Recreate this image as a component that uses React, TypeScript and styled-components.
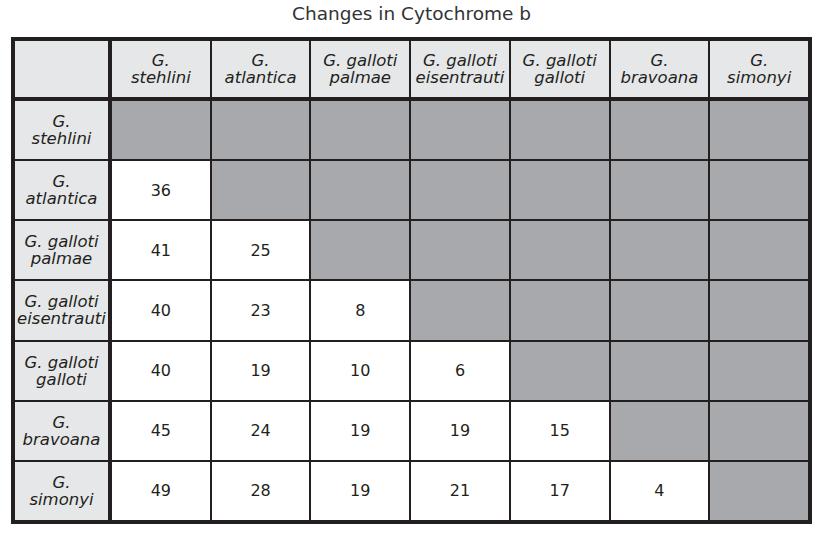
import React from 'react';
import styled, { createGlobalStyle } from 'styled-components';

const GlobalStyle = createGlobalStyle`
  html, body {
    margin: 0;
    padding: 0;
    background: #ffffff;
  }
  body {
    font-family: "DejaVu Sans", Verdana, sans-serif;
    color: #231f20;
  }
`;

const Page = styled.div`
  width: 823px;
  height: 533px;
  padding: 3px 11px 0 11px;
  box-sizing: border-box;
`;

const Title = styled.div`
  width: 801px;
  text-align: center;
  font-size: 18.5px;
  line-height: 22px;
  color: #333333;
  margin-bottom: 12px;
`;

const Grid = styled.div`
  display: grid;
  grid-template-columns: 95px repeat(7, 1fr);
  grid-template-rows: 58px repeat(7, 1fr);
  gap: 2px;
  width: 801px;
  height: 487px;
  box-sizing: border-box;
  border: 4px solid #231f20;
  background: #231f20;
`;

type Kind = 'head' | 'shade' | 'value';

const Cell = styled.div<{ $kind: Kind; $firstCol?: boolean; $firstRow?: boolean }>`
  display: flex;
  align-items: center;
  justify-content: center;
  text-align: center;
  margin-right: ${(p) => (p.$firstCol ? '2px' : '0')};
  margin-bottom: ${(p) => (p.$firstRow ? '2px' : '0')};
  background: ${(p) =>
    p.$kind === 'head' ? '#e6e7e8' : p.$kind === 'shade' ? '#a7a9ac' : '#ffffff'};
  font-style: ${(p) => (p.$kind === 'head' ? 'italic' : 'normal')};
  font-size: ${(p) => (p.$kind === 'head' ? '16.5px' : '16px')};
  line-height: 17px;
  color: #231f20;
  white-space: nowrap;
`;

const species: [string, string][] = [
  ['G.', 'stehlini'],
  ['G.', 'atlantica'],
  ['G. galloti', 'palmae'],
  ['G. galloti', 'eisentrauti'],
  ['G. galloti', 'galloti'],
  ['G.', 'bravoana'],
  ['G.', 'simonyi'],
];

const values: number[][] = [
  [],
  [36],
  [41, 25],
  [40, 23, 8],
  [40, 19, 10, 6],
  [45, 24, 19, 19, 15],
  [49, 28, 19, 21, 17, 4],
];

const Name = ({ lines }: { lines: [string, string] }) => (
  <span>
    {lines[0]}
    <br />
    {lines[1]}
  </span>
);

export default function App() {
  return (
    <Page>
      <GlobalStyle />
      <Title>Changes in Cytochrome b</Title>
      <Grid>
        <Cell $kind="head" $firstCol $firstRow />
        {species.map((s, i) => (
          <Cell key={`h${i}`} $kind="head" $firstRow>
            <Name lines={s} />
          </Cell>
        ))}
        {species.map((s, r) => (
          <React.Fragment key={`r${r}`}>
            <Cell $kind="head" $firstCol>
              <Name lines={s} />
            </Cell>
            {species.map((_, c) =>
              c < values[r].length ? (
                <Cell key={c} $kind="value">
                  {values[r][c]}
                </Cell>
              ) : (
                <Cell key={c} $kind="shade" />
              )
            )}
          </React.Fragment>
        ))}
      </Grid>
    </Page>
  );
}
